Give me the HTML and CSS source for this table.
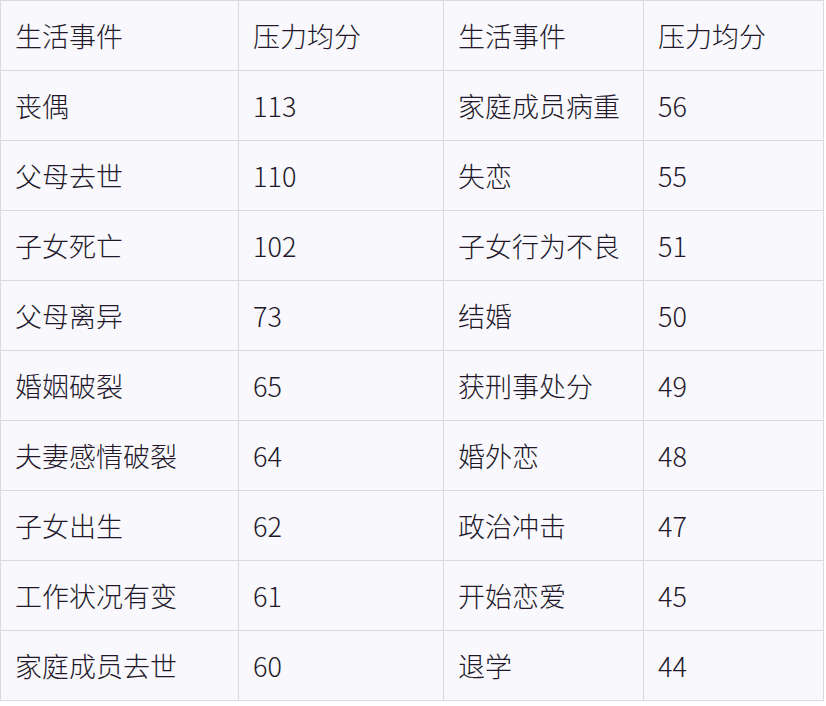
FILE: index.html
```html
<!DOCTYPE html>
<html lang="zh-CN">
<head>
<meta charset="utf-8">
<link rel="stylesheet" href="styles.css">
</head>
<body>
<table class="stress">
  <colgroup>
    <col class="c1"><col class="c2"><col class="c3"><col class="c4">
  </colgroup>
  <tr><td>生活事件</td><td>压力均分</td><td>生活事件</td><td>压力均分</td></tr>
  <tr><td>丧偶</td><td>113</td><td>家庭成员病重</td><td>56</td></tr>
  <tr><td>父母去世</td><td>110</td><td>失恋</td><td>55</td></tr>
  <tr><td>子女死亡</td><td>102</td><td>子女行为不良</td><td>51</td></tr>
  <tr><td>父母离异</td><td>73</td><td>结婚</td><td>50</td></tr>
  <tr><td>婚姻破裂</td><td>65</td><td>获刑事处分</td><td>49</td></tr>
  <tr><td>夫妻感情破裂</td><td>64</td><td>婚外恋</td><td>48</td></tr>
  <tr><td>子女出生</td><td>62</td><td>政治冲击</td><td>47</td></tr>
  <tr><td>工作状况有变</td><td>61</td><td>开始恋爱</td><td>45</td></tr>
  <tr><td>家庭成员去世</td><td>60</td><td>退学</td><td>44</td></tr>
</table>
</body>
</html>
```

FILE: styles.css
```css
html, body {
  margin: 0;
  padding: 0;
  background: #ffffff;
}

.stress {
  border-collapse: collapse;
  table-layout: fixed;
  width: 823px;
  background: #f9f9fd;
  font-family: "Noto Sans CJK SC", "Noto Sans", sans-serif;
  font-size: 27px;
  font-weight: 300;
  color: #22182a;
}

.c1 { width: 238px; }
.c2 { width: 205px; }
.c3 { width: 200px; }
.c4 { width: 180px; }

.stress tr {
  height: 70px;
}

.stress td {
  border: 1px solid #d9d9df;
  padding: 0 0 0 14px;
  vertical-align: middle;
  white-space: nowrap;
  line-height: 1;
}
```
